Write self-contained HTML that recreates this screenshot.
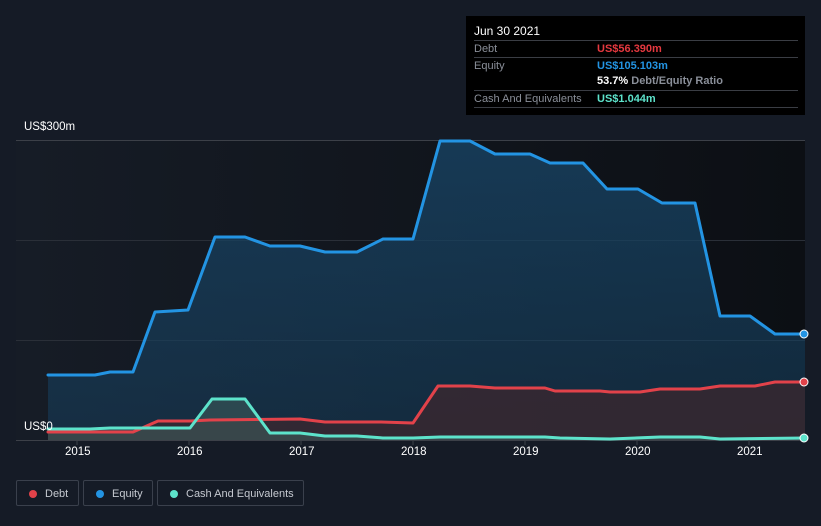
<!DOCTYPE html>
<html style="margin:0;height:526px;overflow:hidden"><head><meta charset="utf-8"><style>
body{margin:0;background:#151b26;width:821px;height:526px;overflow:hidden;font-family:"Liberation Sans",sans-serif;position:relative;}
.tt{position:absolute;left:466px;top:16px;width:339px;height:99px;background:#000;}
.tt .h{position:absolute;left:8px;top:8px;color:#fff;font-size:12px;}
.tt .r{position:absolute;left:8px;width:324px;border-top:1px solid #3a3d44;font-size:11px;color:#8a8f99;height:16px;line-height:16px;white-space:nowrap;}
.tt .v{position:absolute;left:123px;top:0;font-weight:bold;}
.leg{position:absolute;top:480px;height:26px;border:1px solid #3a404c;border-radius:2px;color:#c5c9d0;font-size:11px;line-height:26px;box-sizing:border-box;white-space:nowrap;}
.leg i{position:absolute;left:12px;top:9px;width:8px;height:8px;border-radius:50%;}
.leg span{position:absolute;left:28px;}
.ax{position:absolute;color:#fff;font-size:11.5px;white-space:nowrap;}
</style></head><body>
<svg width="821" height="526" style="position:absolute;left:0;top:0">
<defs>
<linearGradient id="bg" x1="0" x2="1" y1="0" y2="0"><stop offset="0" stop-color="#161c26"/><stop offset="1" stop-color="#0c0f14"/></linearGradient>
<linearGradient id="eq" x1="0" x2="0" y1="0" y2="1"><stop offset="0" stop-color="#17405f" stop-opacity=".85"/><stop offset="1" stop-color="#17405f" stop-opacity=".5"/></linearGradient>
</defs>
<rect x="16" y="140" width="789" height="300" fill="url(#bg)"/>
<line x1="16" y1="140.5" x2="805" y2="140.5" stroke="#3c4048"/>
<line x1="16" y1="240.5" x2="805" y2="240.5" stroke="#2a2f38"/>
<line x1="16" y1="340.5" x2="805" y2="340.5" stroke="#2a2f38"/>
<line x1="16" y1="440.5" x2="805" y2="440.5" stroke="#3c4048"/>
<polygon fill="url(#eq)" points="48,440 48,375 95,375 110,372 133,372 155,312 188,310 215,237 245,237 270,246 300,246 325,252 357,252 383,239 413,239 440,141 470,141 495,154 530,154 550,163 583,163 607,189 638,189 662,203 695,203 720,316 750,316 775,334 805,334 805,440"/>
<polygon fill="#3a2830" fill-opacity=".8" points="48,440 48,432 133,432 158,421 190,421 210,420 300,419 325,422 380,422 413,423 438,386 470,386 495,388 545,388 555,391 600,391 610,392 640,392 660,389 700,389 720,386 755,386 775,382 805,382 805,440"/>
<polygon fill="#3c5a5a" fill-opacity=".6" points="48,440 48,429 90,429 110,428 190,428 212,399 245,399 270,433 300,433 325,436 357,436 383,438 413,438 440,437 545,437 560,438 610,439 660,437 700,437 720,439 805,438 805,440"/>
<g fill="none" stroke-width="3" stroke-linejoin="round" stroke-linecap="round">
<polyline stroke="#2394e3" points="48,375 95,375 110,372 133,372 155,312 188,310 215,237 245,237 270,246 300,246 325,252 357,252 383,239 413,239 440,141 470,141 495,154 530,154 550,163 583,163 607,189 638,189 662,203 695,203 720,316 750,316 775,334 805,334"/>
<polyline stroke="#e2424a" points="48,432 133,432 158,421 190,421 210,420 300,419 325,422 380,422 413,423 438,386 470,386 495,388 545,388 555,391 600,391 610,392 640,392 660,389 700,389 720,386 755,386 775,382 805,382"/>
<polyline stroke="#5de3cb" points="48,429 90,429 110,428 190,428 212,399 245,399 270,433 300,433 325,436 357,436 383,438 413,438 440,437 545,437 560,438 610,439 660,437 700,437 720,439 805,438"/>
</g>
<circle cx="804" cy="334" r="4" fill="#2394e3" stroke="#fff" stroke-width="1"/>
<circle cx="804" cy="382" r="4" fill="#e2424a" stroke="#fff" stroke-width="1"/>
<circle cx="804" cy="438" r="4" fill="#5de3cb" stroke="#fff" stroke-width="1"/>
<g stroke="#3c4048"><line x1="77" y1="440" x2="77" y2="445"/><line x1="189" y1="440" x2="189" y2="445"/><line x1="301" y1="440" x2="301" y2="445"/><line x1="413" y1="440" x2="413" y2="445"/><line x1="525" y1="440" x2="525" y2="445"/><line x1="637" y1="440" x2="637" y2="445"/><line x1="749" y1="440" x2="749" y2="445"/></g>
</svg>
<div class="ax" style="left:24px;top:121px">US$300m</div>
<div class="ax" style="left:24px;top:421px">US$0</div>
<div class="ax" style="left:65px;top:446px">2015</div>
<div class="ax" style="left:177px;top:446px">2016</div>
<div class="ax" style="left:289px;top:446px">2017</div>
<div class="ax" style="left:401px;top:446px">2018</div>
<div class="ax" style="left:513px;top:446px">2019</div>
<div class="ax" style="left:625px;top:446px">2020</div>
<div class="ax" style="left:737px;top:446px">2021</div>
<div class="tt">
<div class="h">Jun 30 2021</div>
<div class="r" style="top:24px">Debt<span class="v" style="color:#e5383f">US$56.390m</span></div>
<div class="r" style="top:41px">Equity<span class="v" style="color:#2394e3">US$105.103m</span></div>
<div class="r" style="top:57px;border-top:none"><span class="v" style="color:#fff">53.7% <span style="color:#8a8f99">Debt/Equity Ratio</span></span></div>
<div class="r" style="top:74px">Cash And Equivalents<span class="v" style="color:#5de3cb">US$1.044m</span></div>
<div class="r" style="top:91px;height:0"></div>
</div>
<div class="leg" style="left:16px;width:63px"><i style="background:#e2424a"></i><span>Debt</span></div>
<div class="leg" style="left:83px;width:70px"><i style="background:#2394e3"></i><span>Equity</span></div>
<div class="leg" style="left:157px;width:147px"><i style="background:#5de3cb"></i><span>Cash And Equivalents</span></div>
</body></html>
